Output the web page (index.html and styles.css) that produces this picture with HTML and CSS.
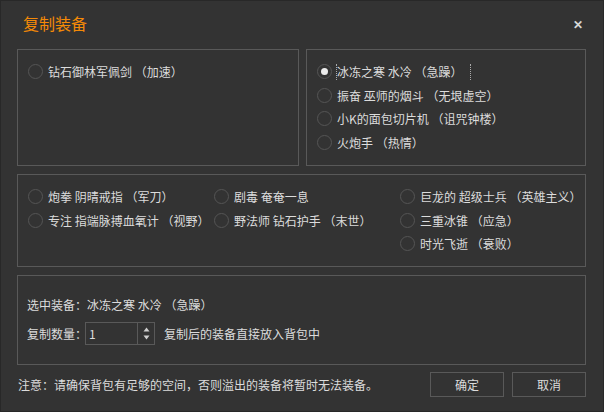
FILE: index.html
```html
<!DOCTYPE html>
<html lang="zh-CN">
<head>
  <meta charset="UTF-8">
  <title>复制装备</title>
  <link rel="stylesheet" href="styles.css">
</head>
<body>
  <div class="dialog">
    <div class="titlebar">
      <span class="title">复制装备</span>
      <span class="close">&#x2715;</span>
    </div>
    <div class="content">
      <div class="top-row">
        <div class="group">
          <label class="radio"><span class="dot"></span><span>钻石御林军佩剑 （加速）</span></label>
        </div>
        <div class="group">
          <label class="radio checked"><span class="dot"></span><span class="focus">冰冻之寒 水冷 （急躁）</span></label>
          <label class="radio"><span class="dot"></span><span>振奋 巫师的烟斗 （无垠虚空）</span></label>
          <label class="radio"><span class="dot"></span><span>小K的面包切片机 （诅咒钟楼）</span></label>
          <label class="radio"><span class="dot"></span><span>火炮手 （热情）</span></label>
        </div>
      </div>
      <div class="group grid">
        <label class="radio"><span class="dot"></span><span>炮拳 阴晴戒指 （军刀）</span></label>
        <label class="radio"><span class="dot"></span><span>剧毒 奄奄一息</span></label>
        <label class="radio"><span class="dot"></span><span>巨龙的 超级士兵 （英雄主义）</span></label>
        <label class="radio"><span class="dot"></span><span>专注 指端脉搏血氧计 （视野）</span></label>
        <label class="radio"><span class="dot"></span><span>野法师 钻石护手 （末世）</span></label>
        <label class="radio"><span class="dot"></span><span>三重冰锥 （应急）</span></label>
        <span></span>
        <span></span>
        <label class="radio"><span class="dot"></span><span>时光飞逝 （衰败）</span></label>
      </div>
      <div class="group settings">
        <div class="line">选中装备：冰冻之寒 水冷 （急躁）</div>
        <div class="line">
          <span>复制数量：</span>
          <div class="spin">
            <span class="spin-value">1</span>
            <span class="spin-arrows">
              <svg width="7" height="5" viewBox="0 0 7 5"><path d="M3.5 0.5 L6.5 4.5 L0.5 4.5 Z" fill="#cfcfcf"/></svg>
              <svg width="7" height="5" viewBox="0 0 7 5"><path d="M0.5 0.5 L6.5 0.5 L3.5 4.5 Z" fill="#cfcfcf"/></svg>
            </span>
          </div>
          <span class="hint">复制后的装备直接放入背包中</span>
        </div>
      </div>
      <div class="footer">
        <span class="note">注意：请确保背包有足够的空间，否则溢出的装备将暂时无法装备。</span>
        <button class="btn">确定</button>
        <button class="btn">取消</button>
      </div>
    </div>
  </div>
</body>
</html>
```

FILE: styles.css
```css
:root {
  --bg: #333333;
  --line: #595959;
  --text: #dcdcdc;
  --orange: #f58a07;
}
* { box-sizing: border-box; }
body {
  margin: 0;
  background: var(--bg);
  font-family: "Microsoft YaHei", "Noto Sans CJK SC", "Noto Sans", sans-serif;
  font-size: 12px;
  color: var(--text);
}
.dialog {
  width: 604px;
  height: 412px;
  border: 1px solid #282828;
  background: var(--bg);
}
.titlebar {
  display: flex;
  align-items: center;
  justify-content: space-between;
  height: 48px;
  padding: 0 20px 4px 22px;
}
.title {
  color: var(--orange);
  font-size: 16px;
}
.close {
  font-size: 12px;
  font-weight: 700;
  color: #d8d8d8;
}
.content {
  padding: 0 17px 0 16px;
  display: flex;
  flex-direction: column;
  gap: 8px;
}
.top-row {
  display: flex;
  gap: 7px;
}
.top-row .group { height: 117px; }
.top-row .group:first-child { width: 282px; }
.top-row .group:last-child { flex: 1; }
.group {
  border: 1px solid var(--line);
  padding: 10px 10px 0;
}
.radio {
  display: flex;
  align-items: center;
  gap: 5px;
  height: 23.5px;
  white-space: nowrap;
}
.dot {
  width: 15px;
  height: 15px;
  border-radius: 50%;
  border: 1px solid #555;
  flex: none;
  display: flex;
  align-items: center;
  justify-content: center;
}
.checked .dot::after {
  content: "";
  width: 7px;
  height: 7px;
  border-radius: 50%;
  background: #ececec;
}
.focus {
  border-left: 1px dotted #aaa;
  border-right: 1px dotted #aaa;
  padding: 0 8px 0 0;
  margin-left: -1px;
  line-height: 16px;
}
.grid {
  display: grid;
  grid-template-columns: 186px 186px 1fr;
  align-content: start;
  height: 93px;
}
.settings {
  height: 90px;
  padding: 17px 9px 0 9px;
  display: flex;
  flex-direction: column;
  gap: 6px;
}
.line {
  display: flex;
  align-items: center;
  height: 23px;
}
.spin {
  display: flex;
  width: 70px;
  height: 23px;
  border: 1px solid var(--line);
  margin-left: -2px;
}
.spin-value {
  flex: 1;
  padding-left: 3px;
  line-height: 21px;
}
.spin-arrows {
  width: 17px;
  border-left: 1px solid var(--line);
  display: flex;
  flex-direction: column;
  align-items: center;
  justify-content: center;
  gap: 3px;
}
.spin-arrows svg { display: block; }
.hint { margin-left: 9px; }
.footer {
  display: flex;
  align-items: center;
  gap: 8px;
  margin-top: -1px;
}
.note { flex: 1; padding-left: 1px; }
.btn {
  width: 74px;
  height: 25px;
  background: var(--bg);
  border: 1px solid var(--line);
  color: var(--text);
  font: inherit;
  padding: 0;
}
```
